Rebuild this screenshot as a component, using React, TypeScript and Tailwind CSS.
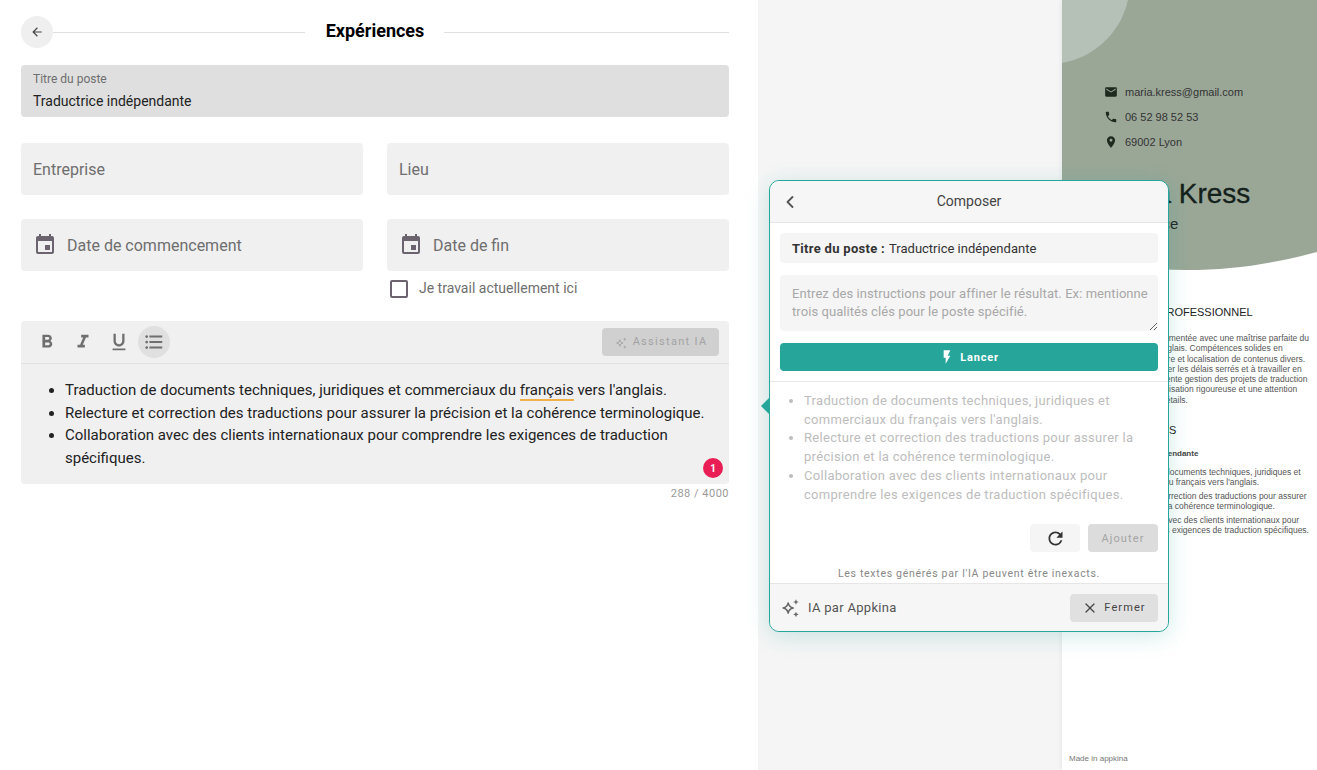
import { ChevronLeft, X } from "lucide-react";
import {
  MdArrowBack,
  MdEmail,
  MdEvent,
  MdFlashOn,
  MdFormatBold,
  MdFormatItalic,
  MdFormatListBulleted,
  MdFormatUnderlined,
  MdPhone,
  MdPlace,
  MdRefresh,
} from "react-icons/md";

function Sparkles({ className }: { className?: string }) {
  return (
    <svg viewBox="0 0 24 24" className={className} fill="none">
      <path
        d="M10 6.5c.7 3.6 2 4.9 5.5 5.5-3.500.6-4.800 1.900-5.500 5.500-.7-3.600-2-4.900-5.500-5.500 3.500-.6 4.800-1.900 5.500-5.500z"
        stroke="currentColor"
        strokeWidth="1.700"
        strokeLinejoin="round"
      />
      <path d="M18.500 2.500l.9 2.100 2.100.9-2.100.9-.9 2.100-.9-2.100-2.100-.9 2.100-.9z" fill="currentColor" />
      <path d="M18.500 16l.9 2.100 2.100.9-2.100.9-.9 2.100-.9-2.100-2.100-.9 2.100-.9z" fill="currentColor" />
    </svg>
  );
}

function Field({ label, icon }: { label: string; icon?: boolean }) {
  return (
    <div className="flex h-[52px] items-center gap-[10px] rounded bg-[#f0f0f0] pl-3 text-base text-[#6e6e6e]">
      {icon && <MdEvent className="h-[24px] w-[24px] text-[#6b646f]" />}
      <span className="pt-[2px]">{label}</span>
    </div>
  );
}

function Form() {
  return (
    <div className="w-[758px] shrink-0 bg-white pl-[21px] pr-[29px] pt-4">
      <div className="flex h-8 items-center">
        <button className="flex h-8 w-8 items-center justify-center rounded-full bg-[#efefef] text-[#444]">
          <MdArrowBack className="h-[14px] w-[14px]" />
        </button>
        <div className="h-px w-[252px] bg-[#e0e0e0]" />
        <h1 className="flex-1 pb-[2px] pl-px text-center text-lg leading-[30px] font-bold text-black">Expériences</h1>
        <div className="h-px w-[285px] bg-[#e0e0e0]" />
      </div>

      <div className="mt-[17px] flex h-[52px] flex-col rounded bg-[#dfdfdf] px-3 pt-[6px]">
        <span className="text-xs leading-[16px] text-[#6e6e6e]">Titre du poste</span>
        <span className="mt-[4px] text-sm leading-[20px] text-[#222]">Traductrice indépendante</span>
      </div>

      <div className="mt-[26px] grid grid-cols-2 gap-x-6 gap-y-6">
        <Field label="Entreprise" />
        <Field label="Lieu" />
        <Field label="Date de commencement" icon />
        <div>
          <Field label="Date de fin" icon />
          <label className="mt-[9px] flex h-[18px] items-center gap-[11px] pl-[3px] text-sm text-[#6e6e6e]">
            <span className="h-[18px] w-[18px] rounded-[2px] border-2 border-[#6b646f]" />
            <span className="pb-[2px]">Je travail actuellement ici</span>
          </label>
        </div>
      </div>

      <div className="mt-[23px] h-[163px] rounded bg-[#f0f0f0]">
        <div className="flex h-[43px] items-center justify-between border-b border-[#e2e2e2] pl-[15px] pr-[10px]">
          <div className="flex items-center text-[#6f6f6f]">
            <MdFormatBold className="h-[22px] w-[22px]" />
            <MdFormatItalic className="ml-[14px] h-[22px] w-[22px]" />
            <MdFormatUnderlined className="ml-[14px] h-[22px] w-[22px]" />
            <span className="ml-[8px] flex h-8 w-8 items-center justify-center rounded-full bg-[#e0e0e0]">
              <MdFormatListBulleted className="h-[22px] w-[22px]" />
            </span>
          </div>
          <button className="flex h-7 w-[117px] items-center justify-center gap-[5px] rounded bg-[#d0d0d0] pt-px text-[11px] tracking-[1.300px] text-[#a3a3a3]">
            <Sparkles className="h-[14px] w-[14px]" />
            Assistant IA
          </button>
        </div>
        <div className="relative h-[120px]">
          <ul className="list-disc pl-[44px] pr-[20px] pt-[15px] text-[15px] leading-[22.500px] text-[#222]">
            <li>
              Traduction de documents techniques, juridiques et commerciaux du{" "}
              <span className="border-b-2 border-[#f2b04a]">français</span> vers l'anglais.
            </li>
            <li>Relecture et correction des traductions pour assurer la précision et la cohérence terminologique.</li>
            <li>Collaboration avec des clients internationaux pour comprendre les exigences de traduction spécifiques.</li>
          </ul>
          <span className="absolute bottom-[6px] right-[6px] flex h-5 w-5 items-center justify-center rounded-full bg-[#e91e55] text-[10px] font-bold text-white">
            1
          </span>
        </div>
      </div>
      <p className="mt-[2px] text-right text-[11px] leading-[16px] tracking-[0.5px] text-[#9a9a9a]">288 / 4000</p>
    </div>
  );
}

const cvFont = { fontFamily: '"Liberation Sans", Arial, sans-serif' };

function ResumePage() {
  return (
    <div style={cvFont} className="relative ml-auto h-[770px] w-[255px] overflow-hidden bg-white text-[#222] shadow-[0_0_6px_rgba(0,0,0,0.08)]">
      <svg viewBox="0 0 255 270" className="absolute left-0 top-0 h-[270px] w-[255px]">
        <path d="M0 0H255V252C210 264 170 270 125 270C80 270 40 262 0 250Z" fill="#9aa797" />
        <path d="M0 0H66C58 35 30 58 0 63Z" fill="#b5c0b6" />
      </svg>

      <div className="relative">
        <div className="pl-[42px] pt-[85px] text-[11px] leading-[14px] text-[#333]">
          <div className="flex h-[14px] items-center gap-[7px]">
            <MdEmail className="h-[14px] w-[14px] text-[#1f2a1f]" />
            maria.kress@gmail.com
          </div>
          <div className="mt-[11px] flex h-[14px] items-center gap-[7px]">
            <MdPhone className="h-[14px] w-[14px] text-[#1f2a1f]" />
            06 52 98 52 53
          </div>
          <div className="mt-[11px] flex h-[14px] items-center gap-[7px]">
            <MdPlace className="h-[14px] w-[14px] text-[#1f2a1f]" />
            69002 Lyon
          </div>
        </div>

        <div className="whitespace-nowrap pl-[39px]">
          <p className="mt-[29px] text-[28px] leading-[32px] text-[#14201a] [-webkit-text-stroke:0.3px_#14201a]">Maria Kress</p>
          <p className="ml-[3px] mt-[5px] text-[15px] leading-[18px] text-[#222]">Traductrice</p>
        </div>

        <div className="whitespace-nowrap pl-[39px]">
          <p className="ml-[8px] mt-[73px] text-[11px] leading-[12px] text-[#222]">RÉSUMÉ PROFESSIONNEL</p>
          <div className="mt-[15px] text-[8.500px] leading-[10.300px] text-[#555]">
            <p>Traductrice expérimentée avec une maîtrise parfaite du</p>
            <p>français et de l'anglais. Compétences solides en</p>
            <p>révision, en écriture et localisation de contenus divers.</p>
            <p>Formée à respecter les délais serrés et à travailler en</p>
            <p>en équipe. Excellente gestion des projets de traduction</p>
            <p>et avec une organisation rigoureuse et une attention</p>
            <p>particulière aux détails.</p>
          </div>
          <p className="-ml-[3px] mt-[19px] text-[11px] leading-[12px] text-[#222]">EXPÉRIENCES</p>
          <p className="mt-[12px] text-[8px] font-bold leading-[11px] text-[#444]">Traductrice indépendante</p>
          <div className="mt-[8px] pl-[10px] text-[8.500px] leading-[10px] text-[#555]">
            <p>Traduction de documents techniques, juridiques et</p>
            <p>commerciaux du français vers l'anglais.</p>
            <p className="mt-[4px]">Relecture et correction des traductions pour assurer</p>
            <p>la précision et la cohérence terminologique.</p>
            <p className="mt-[4px]">Collaboration avec des clients internationaux pour</p>
            <p>comprendre les exigences de traduction spécifiques.</p>
          </div>
        </div>
      </div>

      <p className="absolute bottom-[6px] left-[7px] text-[8px] leading-[10px] text-[#777]">Made in appkina</p>
    </div>
  );
}

function ComposerPopover() {
  return (
    <div className="absolute left-[11px] top-[180px] h-[452px] w-[400px] rounded-[10px] border border-[#26a69a] bg-white shadow-[0_4px_22px_rgba(38,166,154,0.22)]">
      <div className="absolute left-[-9px] top-[216px] h-0 w-0 border-y-[9px] border-r-[9px] border-y-transparent border-r-[#26a69a]" />

      <div className="relative flex h-[42px] items-center justify-center rounded-t-[10px] border-b border-[#e6e6e6] bg-[#f6f6f6] pb-[2px] text-sm text-[#444]">
        <ChevronLeft className="absolute left-[10px] top-[11px] h-[20px] w-[20px] text-[#555]" strokeWidth={2.200} />
        Composer
      </div>

      <div className="px-[10px] pt-[10px]">
        <div className="flex h-[30px] items-center gap-[4px] rounded bg-[#f5f5f5] px-3 pt-px text-[13px] text-[#333]">
          <b className="tracking-[0.3px]">Titre du poste :</b> Traductrice indépendante
        </div>
        <textarea
          className="mt-3 block h-[56px] w-full resize-y rounded bg-[#f5f5f5] pb-[4px] pl-3 pr-[6px] pt-[10px] text-[13px] leading-[18px] tracking-[0.07px] outline-none placeholder:text-[#a8a8a8]"
          placeholder="Entrez des instructions pour affiner le résultat. Ex: mentionne trois qualités clés pour le poste spécifié."
        />
        <button className="mt-3 flex h-7 w-full items-center justify-center gap-[5px] rounded bg-[#26a69a] text-[11px] font-bold tracking-[0.8px] text-white">
          <MdFlashOn className="h-[16px] w-[16px]" />
          <span className="pt-[2px]">Lancer</span>
        </button>
      </div>

      <div className="mt-[10px] border-t border-[#e8e8e8] pl-[34px] pr-[24px] pt-[10px]">
        <ul className="list-disc text-[13px] leading-[18.700px] tracking-[0.3px] text-[#bdbdbd]">
          <li>Traduction de documents techniques, juridiques et commerciaux du français vers l'anglais.</li>
          <li>Relecture et correction des traductions pour assurer la précision et la cohérence terminologique.</li>
          <li>Collaboration avec des clients internationaux pour comprendre les exigences de traduction spécifiques.</li>
        </ul>
      </div>

      <div className="mt-[20px] flex justify-end gap-2 pr-[10px]">
        <button className="flex h-7 w-[50px] items-center justify-center rounded bg-[#f5f5f5] text-[#333]">
          <MdRefresh className="h-[21px] w-[21px]" />
        </button>
        <button className="h-7 w-[70px] rounded bg-[#dcdcdc] pt-[2px] text-[11px] tracking-[1.100px] text-[#a5a5a5]">Ajouter</button>
      </div>

      <p className="mt-[15px] text-center text-[10.500px] leading-[14px] tracking-[0.7px] text-[#888]">
        Les textes générés par l'IA peuvent être inexacts.
      </p>

      <div className="mt-[2px] flex h-[48px] items-center justify-between rounded-b-[10px] border-t border-[#e6e6e6] bg-[#f6f6f6] pl-[9px] pr-[10px]">
        <div className="flex items-center gap-[7px] text-[13px] tracking-[0.3px] text-[#555]">
          <Sparkles className="h-[22px] w-[22px] text-[#666]" />
          <span className="pt-px">IA par Appkina</span>
        </div>
        <button className="flex h-7 w-[88px] items-center justify-center gap-[6px] rounded bg-[#e0e0e0] text-[11px] tracking-[1.100px] text-[#444]">
          <X className="h-4 w-4" strokeWidth={1.800} />
          <span className="pt-[2px]">Fermer</span>
        </button>
      </div>
    </div>
  );
}

export default function App() {
  return (
    <div className="flex h-[770px] w-full overflow-hidden font-['Roboto',sans-serif]">
      <Form />
      <div className="relative flex-1 bg-[#f5f5f5]">
        <ResumePage />
        <ComposerPopover />
      </div>
    </div>
  );
}
